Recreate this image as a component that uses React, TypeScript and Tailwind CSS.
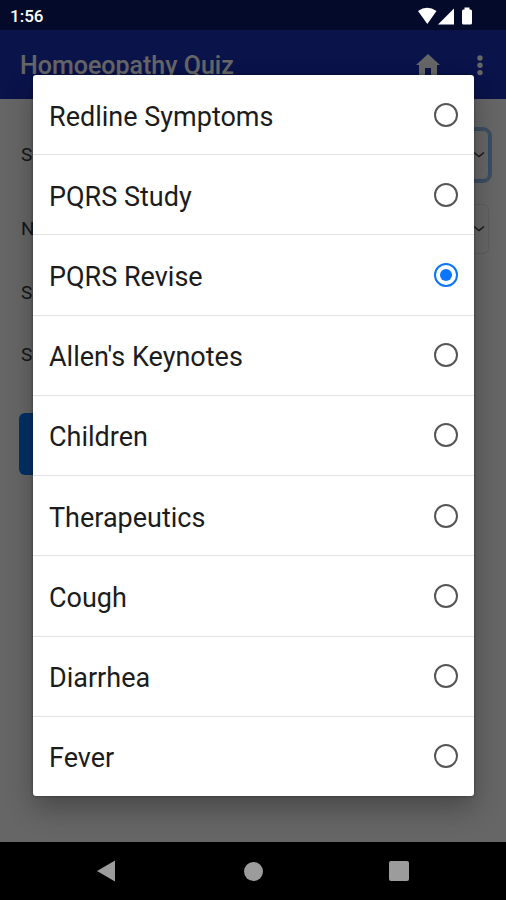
import { useState } from 'react';

const options = [
  'Redline Symptoms',
  'PQRS Study',
  'PQRS Revise',
  "Allen's Keynotes",
  'Children',
  'Therapeutics',
  'Cough',
  'Diarrhea',
  'Fever',
];

function StatusBar() {
  return (
    <div className="flex h-[30px] items-center justify-between bg-[#040b2a] pt-px pr-8 pl-[10px] text-white">
      <span className="text-[17px] leading-5 font-medium">1:56</span>
      <svg width="56" height="18" viewBox="0 0 56 18" fill="currentColor" aria-hidden="true">
        <path d="M0 4Q9 -2.6 18.500 4L9.300 17Z" />
        <path d="M20 17.500 36 1.500V17.500Z" />
        <path d="M46.500 0.500h5v2h1q1.500 0 1.500 1.500v12q0 1.500-1.500 1.500h-7q-1.500 0-1.500-1.500v-12q0-1.500 1.500-1.500h1Z" />
      </svg>
    </div>
  );
}

function AppBar() {
  return (
    <header className="flex h-[69px] items-center justify-between bg-[#1930b8] pt-[3px] pr-[23px] pl-5 text-white">
      <h1 className="text-[25px] leading-8 font-medium">Homoeopathy Quiz</h1>
      <div className="flex items-center gap-[37px]">
        <button type="button" aria-label="Home">
          <svg width="24" height="24" viewBox="0 0 24 24" fill="currentColor">
            <path d="M12 0 24 11h-3v12h-6v-9H9v9H3V11H0Z" />
          </svg>
        </button>
        <button type="button" aria-label="More options">
          <svg width="6" height="22" viewBox="0 0 6 22" fill="currentColor">
            <circle cx="3" cy="3" r="2.700" />
            <circle cx="3" cy="10.300" r="2.700" />
            <circle cx="3" cy="17.600" r="2.700" />
          </svg>
        </button>
      </div>
    </header>
  );
}

function SelectField({ id, label, active }: { id: string; label: string; active?: boolean }) {
  return (
    <div className="flex items-center">
      <label htmlFor={id} className="w-40">
        {label}
      </label>
      <div className="relative flex-1">
        <select
          id={id}
          className={
            active
              ? 'h-[50px] w-full appearance-none rounded-md border border-[#80bdff] ring-3 ring-[#97c3ee]'
              : 'h-[50px] w-full appearance-none rounded-md border border-[#e3e6ea]'
          }
        />
        <svg
          className="pointer-events-none absolute top-[21px] right-1"
          width="12"
          height="8"
          viewBox="0 0 12 8"
          fill="none"
          stroke="#343a40"
          strokeWidth="1.500"
        >
          <path d="m1 1.500 5 4 5-4" />
        </svg>
      </div>
    </div>
  );
}

function QuizForm() {
  return (
    <form className="flex flex-col pt-[31px] pr-[17px] pl-[19px] text-[19px] leading-6 text-[#343a40]">
      <div className="flex flex-col gap-6 pl-[2px]">
        <SelectField id="subject" label="S" active />
        <SelectField id="number" label="N" />
      </div>
      <div className="flex flex-col gap-[38px] pt-[27px] pl-[2px]">
        <span>S</span>
        <span>S</span>
      </div>
      <button type="button" aria-label="Start quiz" className="mt-[46px] h-[62px] w-32 rounded-md bg-[#007bff]" />
    </form>
  );
}

function NavBar() {
  return (
    <nav className="flex h-[58px] items-center justify-between bg-black px-[97px] text-[#9c9c9c]">
      <button type="button" aria-label="Back">
        <svg width="20" height="22" viewBox="0 0 20 22" fill="currentColor">
          <path d="M0 11 18 0.500V21.500Z" />
        </svg>
      </button>
      <button type="button" aria-label="Home screen" className="size-[19px] rounded-full bg-[#9c9c9c]" />
      <button type="button" aria-label="Recent apps" className="size-5 rounded-xs bg-[#9c9c9c]" />
    </nav>
  );
}

export default function App() {
  const [selected, setSelected] = useState('PQRS Revise');

  return (
    <div className="flex min-h-screen flex-col bg-white font-['Roboto',sans-serif]">
      <StatusBar />
      <div className="relative flex flex-1 flex-col">
        <AppBar />
        <QuizForm />

        {/* Option picker */}
        <div className="absolute inset-0 flex flex-col bg-black/60 pt-[45px] pr-8 pb-[46px] pl-[33px]">
          <div
            role="dialog"
            aria-label="Choose a topic"
            className="flex flex-1 flex-col divide-y divide-[#e2e2e2] rounded-[3px] bg-white shadow-[0_12px_28px_rgba(0,0,0,0.3),0_0_3px_rgba(0,0,0,0.4)]"
          >
            {options.map((option) => (
              <label
                key={option}
                className="flex min-h-16 flex-1 items-center justify-between px-4 text-[27px] leading-8 text-[#1c1c1c]"
              >
                <span className="pt-1">{option}</span>
                <input
                  type="radio"
                  name="topic"
                  checked={selected === option}
                  onChange={() => setSelected(option)}
                  className="size-6 appearance-none rounded-full border-2 border-[#555] p-1 checked:border-[#0a75ff] checked:bg-[#0a75ff] checked:bg-clip-content"
                />
              </label>
            ))}
          </div>
        </div>
      </div>
      <NavBar />
    </div>
  );
}
